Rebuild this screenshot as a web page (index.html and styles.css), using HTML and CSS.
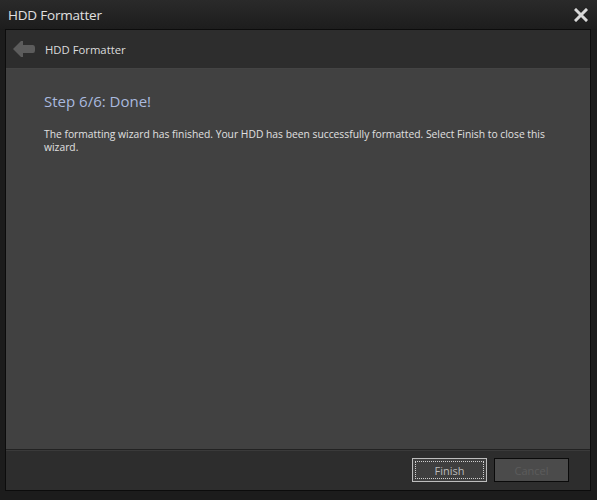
FILE: index.html
```html
<!DOCTYPE html>
<html>
<head>
<meta charset="utf-8">
<link rel="stylesheet" href="styles.css">
</head>
<body>
<div class="window">
  <div class="titlebar">
    <span class="title">HDD Formatter</span>
    <svg class="close" width="14" height="14" viewBox="0 0 14 14">
      <path d="M2 2 L12 12 M12 2 L2 12" stroke="#d8d8d8" stroke-width="3" stroke-linecap="square"/>
    </svg>
  </div>
  <div class="frame">
    <div class="header">
      <svg class="back" width="24" height="18" viewBox="0 0 24 18">
        <path d="M1 9 L9 1 L11 1 L11 5 L21 5 Q23 5 23 7.5 L23 10.5 Q23 13 21 13 L11 13 L11 17 L9 17 Z" fill="#5c5c5c"/>
      </svg>
      <span class="htitle">HDD Formatter</span>
    </div>
    <div class="content">
      <h1 class="step">Step 6/6: Done!</h1>
      <p class="desc">The formatting wizard has finished. Your HDD has been successfully formatted. Select Finish to close this wizard.</p>
    </div>
    <div class="footer">
      <button class="btn primary"><span class="focus">Finish</span></button>
      <button class="btn disabled">Cancel</button>
    </div>
  </div>
</div>
</body>
</html>
```
FILE: styles.css
```css
html, body {
  margin: 0;
  padding: 0;
  background: #1b1b1b;
}
.window {
  width: 597px;
  height: 500px;
  background: #1c1c1c;
  display: flex;
  flex-direction: column;
  font-family: "Open Sans", "DejaVu Sans", sans-serif;
  box-sizing: border-box;
}
.titlebar {
  height: 29px;
  flex: none;
  display: flex;
  align-items: center;
  justify-content: space-between;
  padding: 0 8px 0 8px;
  background: linear-gradient(#2a2a2a, #1d1d1d);
}
.title {
  color: #e0e0e0;
  font-size: 13.5px;
  letter-spacing: -0.2px;
}
.close {
  display: block;
  margin-right: 1px;
}
.frame {
  flex: 1;
  display: flex;
  flex-direction: column;
  margin: 0 6px 9px 5px;
  border: 1px solid #0c0c0c;
}
.header {
  height: 38px;
  flex: none;
  display: flex;
  align-items: center;
  background: #2d2d2d;
  border-bottom: 1px solid #444;
  padding-left: 6px;
}
.back {
  display: block;
  margin-right: 9px;
}
.htitle {
  color: #dcdcdc;
  font-size: 11.3px;
}
.content {
  flex: 1;
  background: #414141;
  padding: 22px 38px 0 38px;
}
.step {
  margin: 0;
  font-weight: normal;
  font-size: 15px;
  color: #a9b9df;
  line-height: 20px;
}
.desc {
  margin: 17px 0 0 0;
  font-size: 10.3px;
  line-height: 13px;
  color: #e0e0e0;
}
.footer {
  height: 40px;
  flex: none;
  background: #2d2d2d;
  border-top: 1px solid #222;
  box-shadow: inset 0 1px 0 #3a3a3a;
  display: flex;
  align-items: center;
  justify-content: flex-end;
  gap: 7px;
  padding-right: 21px;
}
.btn {
  width: 75px;
  height: 24px;
  font-family: inherit;
  font-size: 11px;
  padding: 0;
  border: 1px solid #0a0a0a;
  background: #4a4a4a;
  display: flex;
  align-items: center;
  justify-content: center;
}
.primary {
  border: 1px solid #bdbdbd;
  background: #3f3f3f;
  color: #bbb;
  padding: 2px;
}
.focus {
  flex: 1;
  align-self: stretch;
  border: 1px dotted #d0d0d0;
  display: flex;
  align-items: center;
  justify-content: center;
}
.disabled {
  color: #5c5c5c;
  background: #4b4b4b;
}
```
